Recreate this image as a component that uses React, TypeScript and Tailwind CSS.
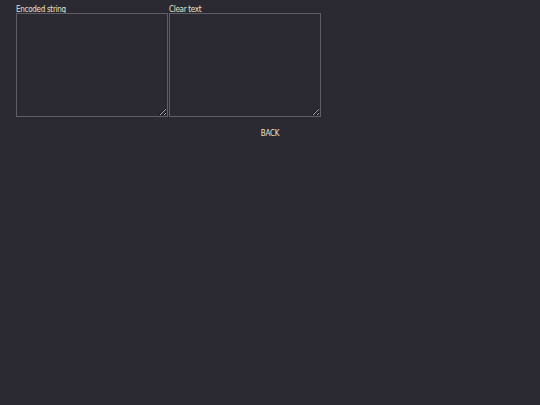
export default function App() {
  return (
    <div
      className="min-h-[405px] w-full bg-[#2b2a33] text-[#e8e4cc] text-[8px] leading-[9px] tracking-[-0.3px]"
      style={{ fontFamily: '"DejaVu Sans Condensed", "DejaVu Sans", sans-serif' }}
    >
      <div className="flex gap-[1px] pl-[16px] pt-[4px]">
        <div className="flex flex-col w-[152px]">
          <label htmlFor="encoded" className="h-[9px] pt-[1px]">Encoded string</label>
          <textarea
            id="encoded"
            className="h-[104px] w-[152px] border border-[#5f5e66] bg-[#2b2a33] text-[#e8e4cc] outline-none"
          />
        </div>
        <div className="flex flex-col w-[152px]">
          <label htmlFor="clear" className="h-[9px] pt-[1px]">Clear text</label>
          <textarea
            id="clear"
            className="h-[104px] w-[152px] border border-[#5f5e66] bg-[#2b2a33] text-[#e8e4cc] outline-none"
          />
        </div>
      </div>
      <div className="flex justify-center pt-[12px]">
        <button type="button" className="text-[#e8e4cc] tracking-[-0.3px]">BACK</button>
      </div>
    </div>
  );
}
